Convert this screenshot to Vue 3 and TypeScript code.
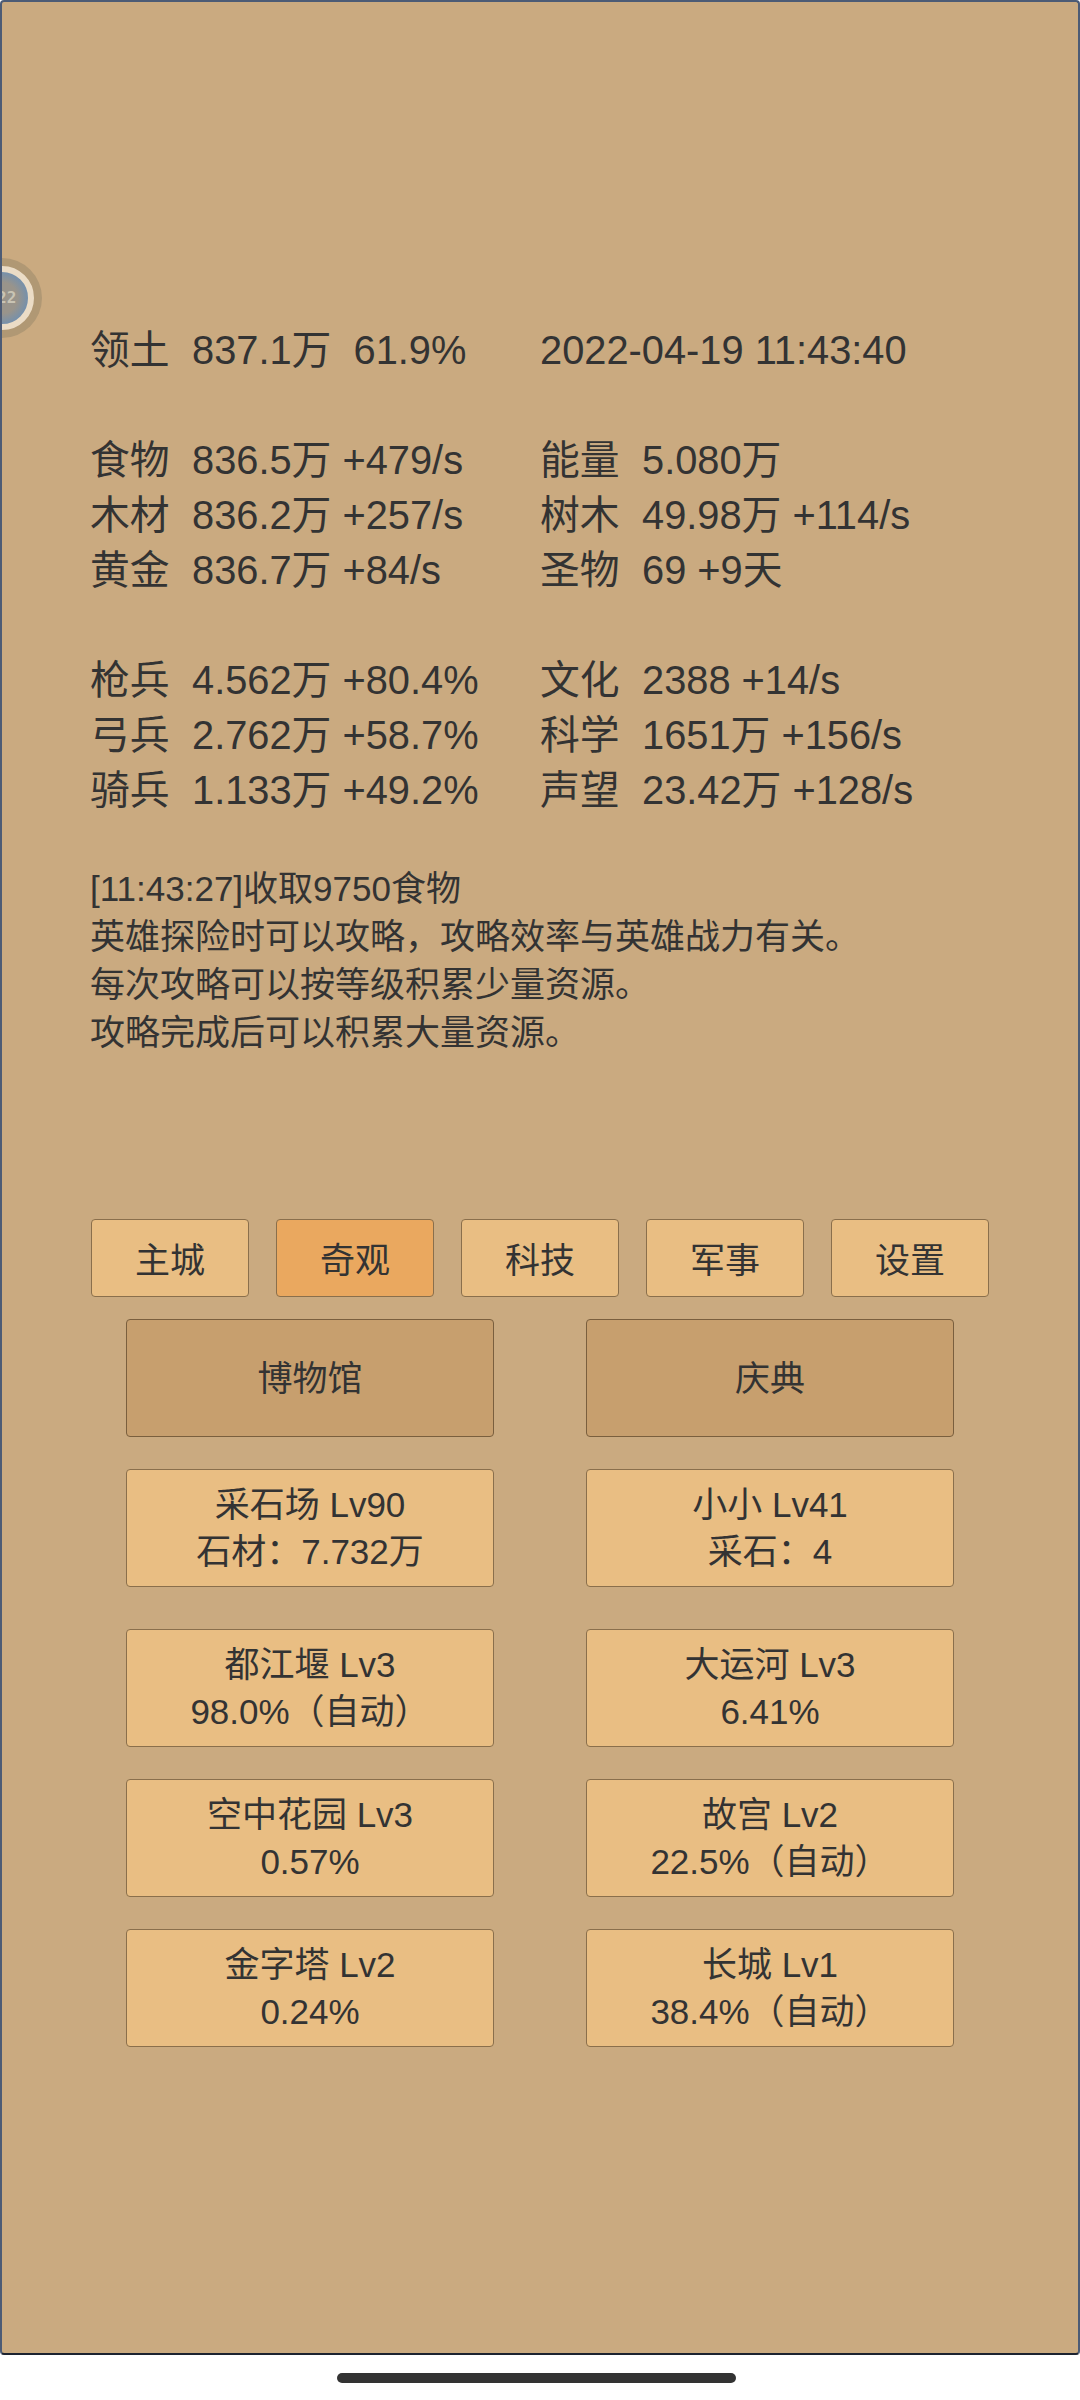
<script setup lang="ts">
const stats = [
  [
    { label: '食物', value: '836.5万 +479/s' },
    { label: '木材', value: '836.2万 +257/s' },
    { label: '黄金', value: '836.7万 +84/s' },
  ],
  [
    { label: '能量', value: '5.080万' },
    { label: '树木', value: '49.98万 +114/s' },
    { label: '圣物', value: '69 +9天' },
  ],
  [
    { label: '枪兵', value: '4.562万 +80.4%' },
    { label: '弓兵', value: '2.762万 +58.7%' },
    { label: '骑兵', value: '1.133万 +49.2%' },
  ],
  [
    { label: '文化', value: '2388 +14/s' },
    { label: '科学', value: '1651万 +156/s' },
    { label: '声望', value: '23.42万 +128/s' },
  ],
];

const logLines = [
  '[11:43:27]收取9750食物',
  '英雄探险时可以攻略，攻略效率与英雄战力有关。',
  '每次攻略可以按等级积累少量资源。',
  '攻略完成后可以积累大量资源。',
];

const tabs = ['主城', '奇观', '科技', '军事', '设置'];
const activeTab = '奇观';

const wonders = [
  ['都江堰 Lv3', '98.0%（自动）'],
  ['大运河 Lv3', '6.41%'],
  ['空中花园 Lv3', '0.57%'],
  ['故宫 Lv2', '22.5%（自动）'],
  ['金字塔 Lv2', '0.24%'],
  ['长城 Lv1', '38.4%（自动）'],
];
</script>

<template>
  <div class="screen">
    <div class="game">
      <div class="float-ball">
        <div class="float-disc">
          <span class="float-bar"></span>
          <span class="float-text">22</span>
        </div>
      </div>

      <div class="stats">
        <div class="row">
          <div class="cell"><span class="label">领土</span><span class="pre">837.1万&nbsp;&nbsp;61.9%</span></div>
          <div class="cell"><span class="pre">2022-04-19 11:43:40</span></div>
        </div>

        <div class="group">
          <div v-for="col in stats.slice(0, 2)" :key="col[0].label" class="col">
            <div v-for="item in col" :key="item.label" class="cell">
              <span class="label">{{ item.label }}</span><span class="pre">{{ item.value }}</span>
            </div>
          </div>
        </div>

        <div class="group">
          <div v-for="col in stats.slice(2)" :key="col[0].label" class="col">
            <div v-for="item in col" :key="item.label" class="cell">
              <span class="label">{{ item.label }}</span><span class="pre">{{ item.value }}</span>
            </div>
          </div>
        </div>
      </div>

      <div class="log">
        <div v-for="line in logLines" :key="line">{{ line }}</div>
      </div>

      <div class="tabs">
        <button v-for="tab in tabs" :key="tab" class="tab" :class="{ active: tab === activeTab }">{{ tab }}</button>
      </div>

      <div class="cards">
        <div class="card dark">博物馆</div>
        <div class="card dark">庆典</div>
      </div>
      <div class="cards">
        <div class="card"><div>采石场 Lv90</div><div>石材：7.732万</div></div>
        <div class="card"><div>小小 Lv41</div><div>采石：4</div></div>
      </div>
      <div class="cards wonders">
        <div v-for="w in wonders" :key="w[0]" class="card">
          <div>{{ w[0] }}</div>
          <div>{{ w[1] }}</div>
        </div>
      </div>
    </div>
    <div class="home-area">
      <div class="home-bar"></div>
    </div>
  </div>
</template>

<style scoped>
.screen {
  width: 1080px;
  height: 2400px;
  background: #fff;
  display: flex;
  flex-direction: column;
  font-family: "Liberation Sans", "Noto Sans CJK SC", sans-serif;
  color: #333;
}

.game {
  position: relative;
  height: 2355px;
  box-sizing: border-box;
  background: #caaa80;
  border: 2px solid #4c5b75;
  border-bottom-color: #1c2330;
  border-radius: 4px;
  padding: 0 89px;
  overflow: hidden;
}

/* floating button, mostly off the left edge */
.float-ball {
  position: absolute;
  left: -40px;
  top: 256px;
  width: 80px;
  height: 80px;
  box-sizing: border-box;
  padding: 8px;
  border-radius: 50%;
  background: #b09874;
}

.float-disc {
  position: relative;
  height: 100%;
  box-sizing: border-box;
  border: 6px solid #ebdcc6;
  border-radius: 50%;
  background: radial-gradient(circle at 50% 50%, #99948b 0 42%, #7490ad 72%);
}

.float-bar {
  position: absolute;
  left: 24px;
  top: -4px;
  width: 10px;
  height: 3px;
  background: #ebdcc6;
}

.float-text {
  position: absolute;
  left: 21px;
  top: 0;
  font-family: "DejaVu Sans Mono", monospace;
  font-size: 16px;
  line-height: 52px;
  font-weight: bold;
  color: #c9c4b4;
}

.stats {
  margin-left: -1px;
  padding-top: 321px;
  font-size: 39.8px;
  line-height: 55px;
}

.row,
.group {
  display: grid;
  grid-template-columns: 450px 1fr;
}

.group {
  margin-top: 55px;
}

.cell {
  display: flex;
  white-space: pre;
}

.label {
  width: 102px;
}

.pre {
  white-space: pre;
}

.log {
  margin: 47px 0 0 -1px;
  font-size: 35px;
  line-height: 48px;
}

.tabs {
  margin-top: 162px;
  display: flex;
  gap: 27px;
}

.tab {
  width: 158px;
  height: 78px;
  padding: 0 0 2px;
  box-sizing: border-box;
  border: 1px solid #8a6f4c;
  border-radius: 4px;
  background: #e9be83;
  color: #333;
  font: inherit;
  font-size: 35px;
}

.tab.active {
  background: #eaa85f;
}

.cards {
  display: grid;
  grid-template-columns: 368px 368px;
  column-gap: 92px;
  margin: 22px 0 0 35px;
}

.cards + .cards {
  margin-top: 32px;
}

.cards.wonders {
  margin-top: 42px;
  row-gap: 32px;
}

.card {
  height: 118px;
  box-sizing: border-box;
  border: 1px solid #8a6f4c;
  border-radius: 4px;
  background: #e9be83;
  font-size: 35px;
  line-height: 47px;
  display: flex;
  flex-direction: column;
  align-items: center;
  justify-content: center;
  text-align: center;
}

.card.dark {
  background: #c79f6e;
  border-color: #7a5f3e;
}

.home-area {
  flex: 1;
  display: flex;
  justify-content: center;
  padding: 18px 7px 0 0;
}

.home-bar {
  width: 399px;
  height: 10px;
  border-radius: 5px;
  background: #333;
}
</style>
